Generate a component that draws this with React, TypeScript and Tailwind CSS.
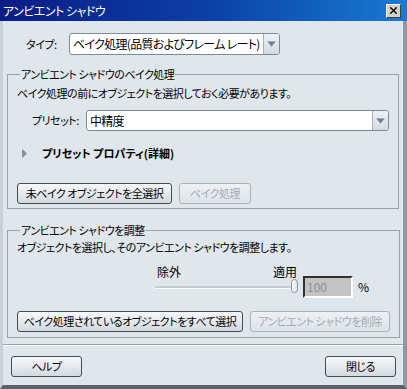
import { X } from "lucide-react";

const Btn = ({ label, disabled, className = "" }: { label: string; disabled?: boolean; className?: string }) => (
    <div
        className={`h-[21px] flex items-center justify-center rounded-[3px] border bg-gradient-to-b leading-none whitespace-nowrap ${
            disabled
                ? "border-[#a9b2bb] from-[#eef1f4] to-[#dde3e9] text-[#a3abb3]"
                : "border-[#444c55] from-[#f7f9fb] to-[#d2d9e0] text-black"
        } ${className}`}
    >
        {label}
    </div>
);

const Combo = ({ value, className = "" }: { value: string; className?: string }) => (
    <div className={`h-[21px] flex rounded-[3px] border border-[#7d8a97] bg-white ${className}`}>
        <div className="flex-1 flex items-center pl-[3px] leading-none whitespace-nowrap overflow-hidden text-[12px] tracking-[-0.7px]">{value}</div>
        <div className="w-[16px] flex items-center justify-center border-l border-[#a6b0ba] bg-gradient-to-b from-[#eef2f5] to-[#d3dbe2] rounded-r-[2px]">
            <svg width="9" height="6" viewBox="0 0 9 6">
                <path d="M0.5 0.5 H8.5 L4.5 5.5 Z" fill="#6f7f8f" stroke="#9aa6b2" strokeWidth="0.5" />
            </svg>
        </div>
    </div>
);

const App = () => {
    return (
        <div className="w-[407px] h-[389px] flex flex-col text-[11px] tracking-[-0.5px] text-black font-['Noto_Sans_CJK_JP',sans-serif] [font-feature-settings:'palt']">
            {/* title bar */}
            <div className="h-[21px] shrink-0 flex items-center justify-between bg-gradient-to-r from-[#0a1c84] via-[#0c3fa6] to-[#1a7ad2] pl-[3px] pr-[6px]">
                <span className="text-white leading-none text-[12px]">アンビエント シャドウ</span>
                <div className="w-[15px] h-[14px] flex items-center justify-center bg-[#d4d0c8] border border-t-white border-l-white border-r-[#404040] border-b-[#404040]">
                    <X size={11} strokeWidth={3} className="text-black" />
                </div>
            </div>

            {/* window body */}
            <div className="flex-1 flex flex-col bg-[#dfe6ec] border-l-[3px] border-r-[4px] border-b-[4px] border-l-[#c9d1d8] border-r-[#8e98a2] border-b-[#5a626a]">
                <div className="mt-[12px] h-[22px] flex items-center pl-[23px]">
                    <span className="w-[43px] leading-none whitespace-nowrap">タイプ:</span>
                    <Combo value="ベイク処理(品質およびフレーム レート)" className="w-[211px] h-[22px]" />
                </div>

                <fieldset className="mt-[12px] mx-[4px] border border-[#99a2ab] px-[9px] pb-[4px]">
                    <legend className="ml-[3px] px-[1px] leading-[14px]">アンビエント シャドウのベイク処理</legend>
                    <div className="mt-[5px] leading-[14px] whitespace-nowrap">ベイク処理の前にオブジェクトを選択しておく必要があります。</div>
                    <div className="mt-[10px] flex items-center pl-[15px]">
                        <span className="w-[54px] leading-none whitespace-nowrap">プリセット:</span>
                        <Combo value="中精度" className="flex-1" />
                    </div>
                    <div className="mt-[15px] h-[14px] flex items-center pl-[5px]">
                        <svg width="5" height="9" viewBox="0 0 5 9">
                            <path d="M0.5 0.5 L4.5 4.5 L0.5 8.5 Z" fill="#8a96a2" stroke="#6a7682" strokeWidth="0.6" />
                        </svg>
                        <span className="ml-[15px] font-bold leading-none tracking-[0px] whitespace-nowrap">プリセット プロパティ(詳細)</span>
                    </div>
                    <div className="mt-[23px] flex gap-[7px]">
                        <Btn label="未ベイク オブジェクトを全選択" className="w-[155px]" />
                        <Btn label="ベイク処理" disabled className="w-[72px]" />
                    </div>
                </fieldset>

                <fieldset className="mt-[14px] mx-[4px] border border-[#99a2ab] px-[9px] pb-[5px]">
                    <legend className="ml-[3px] px-[1px] leading-[14px]">アンビエント シャドウを調整</legend>
                    <div className="mt-[3px] leading-[14px] whitespace-nowrap">オブジェクトを選択し、そのアンビエント シャドウを調整します。</div>
                    <div className="ml-[138px] mt-[11px]">
                        <div className="w-[143px] h-[14px] flex justify-between leading-[14px] pl-[2px] pr-[1px] text-[12px] tracking-[0px]">
                            <span>除外</span>
                            <span>適用</span>
                        </div>
                        <div className="-mt-[3px] flex items-center">
                            <div className="relative w-[143px] h-[22px] flex items-center">
                                <div className="w-[140px] h-[3px] bg-[#c3cdd7] border-b border-white" />
                                <div className="absolute left-[136px] top-[3px] w-[7px] h-[14px] rounded-[4px] border border-[#8b96a1] bg-gradient-to-r from-[#ffffff] to-[#dbe2e8]" />
                            </div>
                            <div className="ml-[5px] w-[50px] h-[22px] flex items-center pl-[2px] bg-[#c3c3c3] border-2 border-t-[#303030] border-l-[#303030] border-r-white border-b-white text-[#8d8d8d] leading-none text-[12px] tracking-[0px]">
                                100
                            </div>
                            <span className="ml-[5px] leading-none text-[12px]">%</span>
                        </div>
                    </div>
                    <div className="mt-[13px] flex gap-[7px]">
                        <Btn label="ベイク処理されているオブジェクトをすべて選択" className="w-[226px]" />
                        <Btn label="アンビエント シャドウを削除" disabled className="w-[140px]" />
                    </div>
                </fieldset>

                <div className="mt-[6px] h-[2px] border-t border-[#9aa3ac] border-b border-b-white" />

                <div className="mt-[10px] flex justify-between ml-[8px] mr-[7px]">
                    <Btn label="ヘルプ" className="w-[71px]" />
                    <Btn label="閉じる" className="w-[71px]" />
                </div>
            </div>
        </div>
    );
};

export default App;
